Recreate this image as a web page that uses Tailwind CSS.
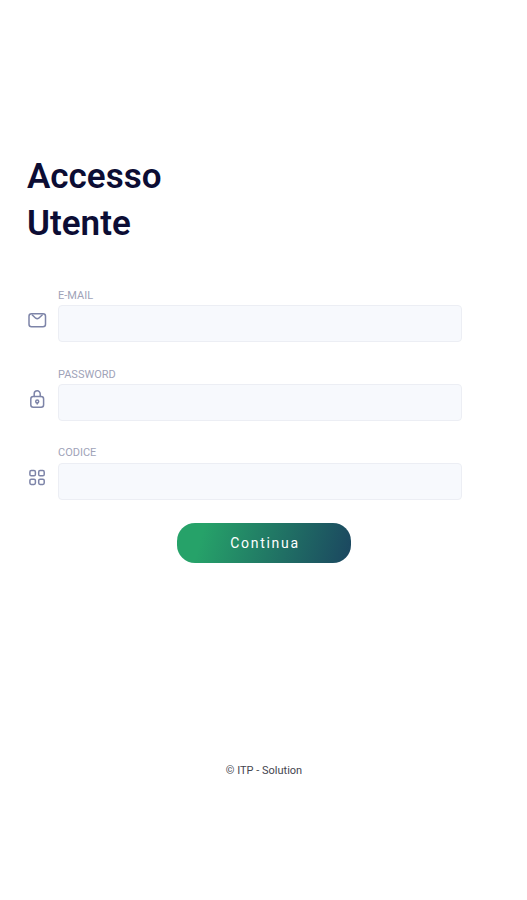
<!DOCTYPE html>
<html lang="it">
<head>
    <meta charset="UTF-8">
    <meta name="viewport" content="width=device-width, initial-scale=1.0">
    <title>Accesso Utente</title>
    <script src="https://cdn.jsdelivr.net/npm/@tailwindcss/browser@4"></script>
</head>
<body class="bg-white font-['Roboto',sans-serif] overflow-hidden">

    <main class="flex flex-col h-[900px] pt-[154px] pl-[27px] pr-[65px]">
        <h1 class="text-[35px] leading-[46.5px] font-semibold text-[#0c0d34]">Accesso<br>Utente</h1>

        <form class="flex flex-col mt-[41px]">
            <div class="flex items-end h-[54px]">
                <svg class="w-5 h-5 mb-3 mr-[11px] shrink-0" viewBox="0 0 20 20" fill="none" stroke="#7d84a8" stroke-width="1.5" stroke-linecap="round" stroke-linejoin="round">
                    <rect x="2" y="3.7" width="16.5" height="13" rx="2.5"/>
                    <path d="M5.3 5 8.7 8.2q1.5 1.2 3 0L15.2 5"/>
                </svg>
                <div class="flex-1">
                    <label for="email" class="block h-[17px] text-[11px] leading-[15px] text-[#a0a3b8]">E-MAIL</label>
                    <input id="email" type="email" class="block w-full h-[37px] px-3 rounded-[4px] border border-[#eceef4] bg-[#f7f9fd] outline-none">
                </div>
            </div>

            <div class="flex items-end h-[54px] mt-[25px]">
                <svg class="w-5 h-5 mb-3 mr-[11px] shrink-0" viewBox="0 0 20 20" fill="none" stroke="#7d84a8" stroke-width="1.5" stroke-linecap="round" stroke-linejoin="round">
                    <path d="M7.2 7.5V4.8a3 3 0 0 1 6 0v2.7"/>
                    <rect x="3.8" y="7.5" width="12.8" height="10.7" rx="2.5"/>
                    <circle cx="10.2" cy="12.4" r="1.5"/>
                    <path d="M10.2 13.9v1"/>
                </svg>
                <div class="flex-1">
                    <label for="password" class="block h-[17px] text-[11px] leading-[15px] text-[#a0a3b8]">PASSWORD</label>
                    <input id="password" type="password" class="block w-full h-[37px] px-3 rounded-[4px] border border-[#eceef4] bg-[#f7f9fd] outline-none">
                </div>
            </div>

            <div class="flex items-end h-[54px] mt-[25px]">
                <svg class="w-5 h-5 mb-3 mr-[11px] shrink-0" viewBox="0 0 20 20" fill="none" stroke="#7d84a8" stroke-width="1.5">
                    <rect x="2.9" y="2.5" width="5.5" height="5.3" rx="1.4"/>
                    <rect x="11.7" y="2.5" width="5.5" height="5.3" rx="1.4"/>
                    <rect x="2.9" y="11.2" width="5.5" height="5.3" rx="1.4"/>
                    <rect x="11.7" y="11.2" width="5.5" height="5.3" rx="1.4"/>
                </svg>
                <div class="flex-1">
                    <label for="codice" class="block h-[17px] text-[11px] leading-[14px] text-[#a0a3b8]">CODICE</label>
                    <input id="codice" type="text" class="block w-full h-[37px] px-3 rounded-[4px] border border-[#eceef4] bg-[#f7f9fd] outline-none">
                </div>
            </div>

            <button type="submit" class="w-[174px] h-10 mt-[23px] ml-[150px] pl-[2px] rounded-[18px] bg-linear-[105deg] from-[#26a269] from-15% to-[#1b4660] text-[14px] tracking-[1.7px] text-white">Continua</button>
        </form>

        <footer class="mt-[200px] w-[474px] text-center text-[11px] leading-4 text-[#45454f]">© ITP - Solution</footer>
    </main>

</body>
</html>
